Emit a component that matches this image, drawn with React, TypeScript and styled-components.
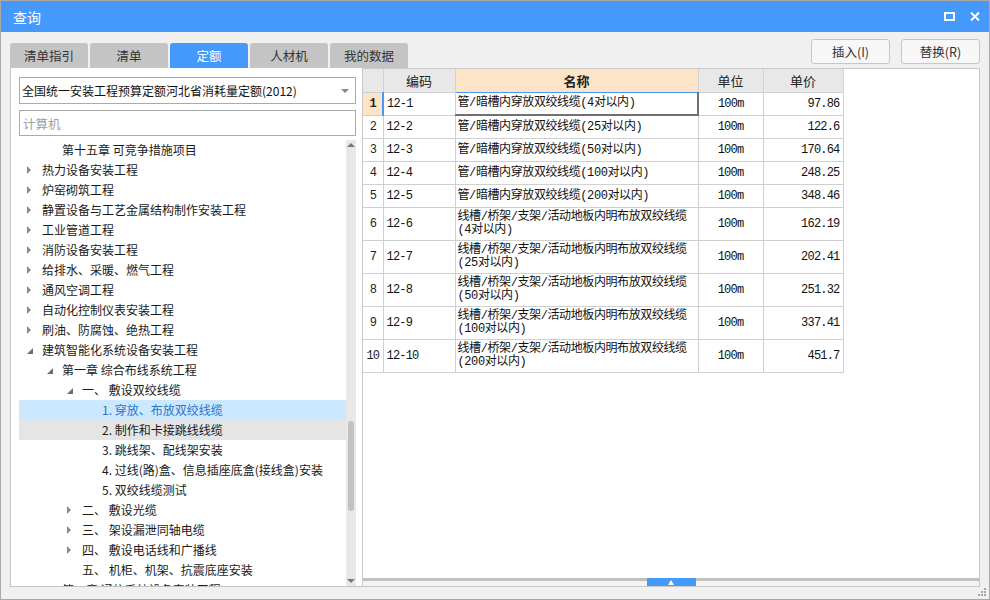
import styled, { createGlobalStyle } from "styled-components";

const GlobalStyle = createGlobalStyle`
  html, body {
    margin: 0;
    padding: 0;
    background: #ffffff;
  }
  body {
    font-family: "Noto Sans CJK SC", "Noto Sans", sans-serif;
    color: #222;
  }
  * {
    box-sizing: border-box;
  }
`;

type Arrow = "closed" | "open";
type RowState = "selected" | "hover";

interface TreeItem {
  level: number;
  label: string;
  arrow?: Arrow;
  state?: RowState;
}

interface QuotaRow {
  code: string;
  name: string;
  unit: string;
  price: string;
  tall?: boolean;
}

const tabs = ["清单指引", "清单", "定额", "人材机", "我的数据"];

const treeItems: TreeItem[] = [
  { level: 1, label: "第十五章 可竞争措施项目" },
  { level: 0, label: "热力设备安装工程", arrow: "closed" },
  { level: 0, label: "炉窑砌筑工程", arrow: "closed" },
  { level: 0, label: "静置设备与工艺金属结构制作安装工程", arrow: "closed" },
  { level: 0, label: "工业管道工程", arrow: "closed" },
  { level: 0, label: "消防设备安装工程", arrow: "closed" },
  { level: 0, label: "给排水、采暖、燃气工程", arrow: "closed" },
  { level: 0, label: "通风空调工程", arrow: "closed" },
  { level: 0, label: "自动化控制仪表安装工程", arrow: "closed" },
  { level: 0, label: "刷油、防腐蚀、绝热工程", arrow: "closed" },
  { level: 0, label: "建筑智能化系统设备安装工程", arrow: "open" },
  { level: 1, label: "第一章 综合布线系统工程", arrow: "open" },
  { level: 2, label: "一、  敷设双绞线缆", arrow: "open" },
  { level: 3, label: "1. 穿放、布放双绞线缆", state: "selected" },
  { level: 3, label: "2. 制作和卡接跳线线缆", state: "hover" },
  { level: 3, label: "3. 跳线架、配线架安装" },
  { level: 3, label: "4. 过线(路)盒、信息插座底盒(接线盒)安装" },
  { level: 3, label: "5. 双绞线缆测试" },
  { level: 2, label: "二、  敷设光缆", arrow: "closed" },
  { level: 2, label: "三、  架设漏泄同轴电缆", arrow: "closed" },
  { level: 2, label: "四、  敷设电话线和广播线", arrow: "closed" },
  { level: 2, label: "五、  机柜、机架、抗震底座安装" },
  { level: 1, label: "第二章 通信系统设备安装工程", arrow: "closed" },
];

const longName = "线槽/桥架/支架/活动地板内明布放双绞线缆";

const quotaRows: QuotaRow[] = [
  { code: "12-1", name: "管/暗槽内穿放双绞线缆(4对以内)", unit: "100m", price: "97.86" },
  { code: "12-2", name: "管/暗槽内穿放双绞线缆(25对以内)", unit: "100m", price: "122.6" },
  { code: "12-3", name: "管/暗槽内穿放双绞线缆(50对以内)", unit: "100m", price: "170.64" },
  { code: "12-4", name: "管/暗槽内穿放双绞线缆(100对以内)", unit: "100m", price: "248.25" },
  { code: "12-5", name: "管/暗槽内穿放双绞线缆(200对以内)", unit: "100m", price: "348.46" },
  { code: "12-6", name: `${longName}\n(4对以内)`, unit: "100m", price: "162.19", tall: true },
  { code: "12-7", name: `${longName}\n(25对以内)`, unit: "100m", price: "202.41", tall: true },
  { code: "12-8", name: `${longName}\n(50对以内)`, unit: "100m", price: "251.32", tall: true },
  { code: "12-9", name: `${longName}\n(100对以内)`, unit: "100m", price: "337.41", tall: true },
  { code: "12-10", name: `${longName}\n(200对以内)`, unit: "100m", price: "451.7", tall: true },
];

export default function App(): React.ReactElement {
  return (
    <>
      <GlobalStyle />
      <Window>
        <TitleBar>
          <Title>查询</Title>
          <TitleIcons>
            <svg width="11" height="9" viewBox="0 0 11 9">
              <rect x="1" y="1" width="9" height="7" fill="none" stroke="#fff" strokeWidth="2" />
            </svg>
            <svg width="10" height="9" viewBox="0 0 10 9">
              <path d="M1 0.5 L9 8.5 M9 0.5 L1 8.5" stroke="#fff" strokeWidth="2" />
            </svg>
          </TitleIcons>
        </TitleBar>

        <Body>
          <Toolbar>
            <TabList>
              {tabs.map((t) => (
                <Tab key={t} $active={t === "定额"}>
                  {t}
                </Tab>
              ))}
            </TabList>
            <Actions>
              <ActionButton type="button">插入(I)</ActionButton>
              <ActionButton type="button">替换(R)</ActionButton>
            </Actions>
          </Toolbar>

          <Main>
            <LeftPanel>
              <Select>
                <span>全国统一安装工程预算定额河北省消耗量定额(2012)</span>
                <DropArrow />
              </Select>
              <SearchInput placeholder="计算机" />
              <TreeArea>
                <TreeList>
                  {treeItems.map((item) => (
                    <TreeRow key={item.label} $level={item.level} $state={item.state}>
                      <ArrowBox>
                        {item.arrow === "closed" && <ClosedArrow />}
                        {item.arrow === "open" && <OpenArrow />}
                      </ArrowBox>
                      <TreeLabel>{item.label}</TreeLabel>
                    </TreeRow>
                  ))}
                </TreeList>
                <ScrollTrack>
                  <ScrollUp />
                  <ScrollThumb />
                  <ScrollDown />
                </ScrollTrack>
              </TreeArea>
            </LeftPanel>

            <RightPanel>
              <TableArea>
                <Grid>
                  <colgroup>
                    <Col $w={20} />
                    <Col $w={72} />
                    <Col $w={243} />
                    <Col $w={65} />
                    <Col $w={80} />
                  </colgroup>
                  <thead>
                    <tr>
                      <HeadCell />
                      <HeadCell>编码</HeadCell>
                      <HeadCell $accent>名称</HeadCell>
                      <HeadCell>单位</HeadCell>
                      <HeadCell>单价</HeadCell>
                    </tr>
                  </thead>
                  <tbody>
                    {quotaRows.map((r, i) => {
                      const current = i === 0;
                      return (
                        <tr key={r.code}>
                          <IndexCell $current={current} $tall={r.tall}>
                            {i + 1}
                          </IndexCell>
                          <Cell $tall={r.tall} $mono $focusLeft={current}>
                            {r.code}
                          </Cell>
                          <NameCell $tall={r.tall} $focus={current}>
                            {r.name}
                          </NameCell>
                          <Cell $tall={r.tall} $mono $align="center">
                            {r.unit}
                          </Cell>
                          <Cell $tall={r.tall} $mono $align="right">
                            {r.price}
                          </Cell>
                        </tr>
                      );
                    })}
                  </tbody>
                </Grid>
              </TableArea>
              <Splitter>
                <SplitHandle>
                  <HandleArrow />
                </SplitHandle>
              </Splitter>
            </RightPanel>
          </Main>
        </Body>

        <Grip width="9" height="9" viewBox="0 0 9 9">
          <rect x="6" y="0" width="2" height="2" fill="#a8a8a8" />
          <rect x="3" y="3" width="2" height="2" fill="#a8a8a8" />
          <rect x="6" y="3" width="2" height="2" fill="#a8a8a8" />
          <rect x="0" y="6" width="2" height="2" fill="#a8a8a8" />
          <rect x="3" y="6" width="2" height="2" fill="#a8a8a8" />
          <rect x="6" y="6" width="2" height="2" fill="#a8a8a8" />
        </Grip>
      </Window>
    </>
  );
}

const Window = styled.div`
  position: relative;
  display: flex;
  flex-direction: column;
  width: 990px;
  height: 600px;
  border: 1px solid #a9a9a9;
  background: #f0f0f0;
  overflow: hidden;
`;

const TitleBar = styled.div`
  display: flex;
  align-items: center;
  justify-content: space-between;
  height: 31px;
  padding: 0 9px 0 12px;
  background: #4499fb;
  color: #fff;
`;

const Title = styled.span`
  font-size: 14px;
  line-height: 1;
`;

const TitleIcons = styled.div`
  display: flex;
  align-items: center;
  gap: 15px;
`;

const Body = styled.div`
  display: flex;
  flex-direction: column;
  padding: 0 9px;
`;

const Toolbar = styled.div`
  display: flex;
  align-items: flex-end;
  justify-content: space-between;
  height: 36px;
`;

const TabList = styled.div`
  display: flex;
  gap: 2px;
`;

const Tab = styled.div<{ $active?: boolean }>`
  width: 78px;
  height: 25px;
  display: flex;
  align-items: center;
  justify-content: center;
  border-radius: 3px 3px 0 0;
  font-size: 12.5px;
  background: ${(p) => (p.$active ? "#4499fb" : "#c4c4c4")};
  color: ${(p) => (p.$active ? "#fff" : "#333")};
`;

const Actions = styled.div`
  display: flex;
  gap: 11px;
  margin-bottom: 4px;
`;

const ActionButton = styled.button`
  width: 79px;
  height: 25px;
  padding: 0;
  border: 1px solid #c6c6c6;
  border-radius: 3px;
  background: #f7f7f7;
  font-family: "Noto Sans CJK SC", "Noto Sans", sans-serif;
  font-size: 12.5px;
  color: #333;
`;

const Main = styled.div`
  display: flex;
  height: 519px;
`;

const LeftPanel = styled.div`
  display: flex;
  flex-direction: column;
  width: 352px;
  padding: 9px 6px 0 8px;
  background: #fff;
  border-left: 1px solid #c4c4c4;
  border-bottom: 1px solid #c4c4c4;
`;

const Select = styled.div`
  display: flex;
  align-items: center;
  justify-content: space-between;
  height: 27px;
  padding: 0 6px 0 2px;
  border: 1px solid #ababab;
  font-size: 12px;
  color: #111;
  white-space: nowrap;
`;

const DropArrow = styled.span`
  width: 0;
  height: 0;
  border-left: 4px solid transparent;
  border-right: 4px solid transparent;
  border-top: 4px solid #888;
`;

const SearchInput = styled.input`
  height: 26px;
  margin-top: 6px;
  padding: 0 3px;
  border: 1px solid #ababab;
  outline: none;
  font-family: "Noto Sans CJK SC", "Noto Sans", sans-serif;
  font-size: 12.5px;
  &::placeholder {
    color: #a0a0a0;
  }
`;

const TreeArea = styled.div`
  display: flex;
  flex: 1;
  min-height: 0;
  margin-top: 4px;
  overflow: hidden;
`;

const TreeList = styled.div`
  flex: 1;
  overflow: hidden;
`;

const TreeRow = styled.div<{ $level: number; $state?: RowState }>`
  display: flex;
  align-items: center;
  height: 20px;
  padding-left: ${(p) => 4 + p.$level * 20}px;
  font-size: 12px;
  white-space: nowrap;
  background: ${(p) =>
    p.$state === "selected" ? "#cce8ff" : p.$state === "hover" ? "#e5e5e5" : "transparent"};
  color: ${(p) => (p.$state === "selected" ? "#2b74c9" : "#1a1a1a")};
`;

const ArrowBox = styled.span`
  display: flex;
  align-items: center;
  width: 19px;
  height: 20px;
  padding-left: 4px;
`;

const ClosedArrow = styled.span`
  width: 0;
  height: 0;
  border-left: 4px solid #8a8a8a;
  border-top: 4px solid transparent;
  border-bottom: 4px solid transparent;
`;

const OpenArrow = styled.span`
  width: 0;
  height: 0;
  margin-top: 1px;
  border-right: 6px solid #6e6e6e;
  border-top: 6px solid transparent;
`;

const TreeLabel = styled.span`
  line-height: 20px;
`;

const ScrollTrack = styled.div`
  display: flex;
  flex-direction: column;
  align-items: center;
  width: 10px;
  background: #e8e8e8;
`;

const ScrollUp = styled.span`
  margin-top: 3px;
  width: 0;
  height: 0;
  border-left: 4px solid transparent;
  border-right: 4px solid transparent;
  border-bottom: 4px solid #7a7a7a;
`;

const ScrollThumb = styled.span`
  width: 6px;
  height: 90px;
  margin-top: 274px;
  border-radius: 3px;
  background: #c1c1c1;
`;

const ScrollDown = styled.span`
  margin-top: auto;
  margin-bottom: 3px;
  width: 0;
  height: 0;
  border-left: 4px solid transparent;
  border-right: 4px solid transparent;
  border-top: 4px solid #7a7a7a;
`;

const RightPanel = styled.div`
  display: flex;
  flex-direction: column;
  flex: 1;
  background: #fff;
  border: 1px solid #c8c8c8;
`;

const TableArea = styled.div`
  flex: 1;
  overflow: hidden;
`;

const Grid = styled.table`
  table-layout: fixed;
  width: 480px;
  border-collapse: collapse;
`;

const Col = styled.col<{ $w: number }>`
  width: ${(p) => p.$w}px;
`;

const HeadCell = styled.th<{ $accent?: boolean }>`
  height: 23px;
  padding: 0;
  border-right: 1px solid #d0d0d0;
  border-bottom: 1px solid ${(p) => (p.$accent ? "#4499fb" : "#d0d0d0")};
  background: ${(p) => (p.$accent ? "#fde4c6" : "#e8e8e8")};
  font-size: 13px;
  font-weight: ${(p) => (p.$accent ? 700 : 400)};
  color: #222;
`;

const Cell = styled.td<{
  $tall?: boolean;
  $mono?: boolean;
  $align?: "left" | "center" | "right";
  $focusLeft?: boolean;
}>`
  height: ${(p) => (p.$tall ? 33 : 23)}px;
  padding: 1px 3px 0;
  border: 1px solid #d0d0d0;
  border-left: ${(p) => (p.$focusLeft ? "2px solid #4499fb" : "1px solid #d0d0d0")};
  text-align: ${(p) => p.$align ?? "left"};
  font-family: ${(p) =>
    p.$mono
      ? `"Liberation Mono", "Noto Sans CJK SC", monospace`
      : `"Noto Sans CJK SC", "Noto Sans", sans-serif`};
  font-size: 12px;
  letter-spacing: ${(p) => (p.$mono ? "-0.8px" : "0")};
  color: #111;
  white-space: nowrap;
`;

const IndexCell = styled.td<{ $current?: boolean; $tall?: boolean }>`
  height: ${(p) => (p.$tall ? 33 : 23)}px;
  padding: 1px 0 0;
  border: 1px solid #d0d0d0;
  border-left: none;
  text-align: center;
  font-family: "Liberation Mono", monospace;
  font-size: 12px;
  letter-spacing: -1px;
  font-weight: ${(p) => (p.$current ? 700 : 400)};
  background: ${(p) => (p.$current ? "#fde4c6" : "#fff")};
  color: #222;
`;

const NameCell = styled.td<{ $tall?: boolean; $focus?: boolean }>`
  height: ${(p) => (p.$tall ? 33 : 23)}px;
  padding: 1px 2px 0;
  border: 1px solid #d0d0d0;
  border-right: ${(p) => (p.$focus ? "2px solid #707070" : "1px solid #d0d0d0")};
  border-bottom: ${(p) => (p.$focus ? "2px solid #707070" : "1px solid #d0d0d0")};
  font-family: "Liberation Mono", "Noto Sans CJK SC", monospace;
  font-size: 12px;
  letter-spacing: -0.4px;
  line-height: 13px;
  white-space: pre-line;
  color: #111;
`;

const Splitter = styled.div`
  display: flex;
  justify-content: center;
  height: 8px;
  border-top: 3px solid #c0c0c0;
  background: #f3f3f3;
`;

const SplitHandle = styled.div`
  display: flex;
  align-items: center;
  justify-content: center;
  width: 49px;
  height: 8px;
  margin-top: -3px;
  background: #4499fb;
`;

const HandleArrow = styled.span`
  width: 0;
  height: 0;
  border-left: 3px solid transparent;
  border-right: 3px solid transparent;
  border-bottom: 5px solid #fff;
`;

const Grip = styled.svg`
  position: absolute;
  right: 2px;
  bottom: 2px;
`;
